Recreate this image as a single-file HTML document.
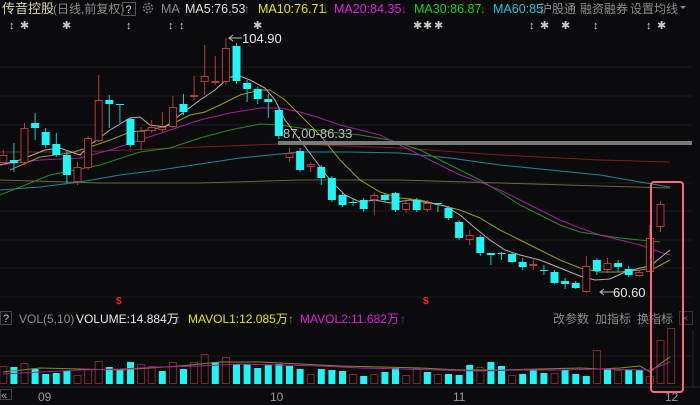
<!DOCTYPE html>
<html><head><meta charset="utf-8">
<style>
html,body{margin:0;padding:0;background:#0b0b0d;width:700px;height:405px;overflow:hidden}
svg{display:block}
text{font-family:"Liberation Sans","Noto Sans CJK SC",sans-serif}
</style></head><body>
<svg id="s" width="700" height="405" viewBox="0 0 700 405" xmlns="http://www.w3.org/2000/svg">
<rect width="700" height="405" fill="#0b0b0d"/>
<g stroke="#1c1c1f" stroke-width="1">
<line x1="0" y1="67" x2="692" y2="67"/><line x1="0" y1="96" x2="692" y2="96"/><line x1="0" y1="125" x2="692" y2="125"/>
<line x1="0" y1="183" x2="692" y2="183"/><line x1="0" y1="211" x2="692" y2="211"/><line x1="0" y1="240" x2="692" y2="240"/>
<line x1="0" y1="268" x2="692" y2="268"/><line x1="0" y1="297" x2="692" y2="297"/><line x1="0" y1="356" x2="692" y2="356"/>
</g>
<line x1="0" y1="387" x2="700" y2="387" stroke="#2a2a2e"/>
<line x1="693" y1="330" x2="693" y2="387" stroke="#2a2a2e"/>
<g id="lines" fill="none" stroke-width="1"></g>
<rect x="278" y="141" width="414" height="4" fill="#7a7a7a"/>
<text x="283" y="138" font-size="13" fill="#bdbdbd">87.00-86.33</text>
<g id="c"></g>
<g id="v"></g>
<text x="2" y="13" font-size="13" fill="#ddd6a8">传音控股</text>
<text x="53" y="13" font-size="12" fill="#8c8c8c">(日线,前复权)</text>
<rect x="122.5" y="2.5" width="13" height="13" fill="none" stroke="#555"/>
<text x="125.5" y="13" font-size="11" fill="#ccc">?</text>
<circle cx="148" cy="8" r="4.5" fill="none" stroke="#777" stroke-width="1.5" stroke-dasharray="2 1.5"/>
<circle cx="148" cy="8" r="2" fill="none" stroke="#777"/>
<text x="161" y="13" font-size="12.5" fill="#8c8c8c">MA</text>
<text x="185" y="13" font-size="12.5" fill="#e0e0e0">MA5:76.53</text>
<text x="244" y="13" font-size="12" fill="#888">↑</text>
<text x="258" y="13" font-size="12.5" fill="#e6e600">MA10:76.71</text>
<text x="323" y="13" font-size="12" fill="#9a9a30">↓</text>
<text x="334" y="13" font-size="12.5" fill="#e020e0">MA20:84.35</text>
<text x="401" y="13" font-size="12" fill="#a020a0">↓</text>
<text x="414" y="13" font-size="12.5" fill="#20d020">MA30:86.87</text>
<text x="480" y="13" font-size="12" fill="#1a9a1a">↓</text>
<text x="493" y="13" font-size="12.5" fill="#20c8d8">MA60:85</text>
<text x="540" y="13" font-size="12" fill="#8c8c8c">沪股通</text>
<text x="580" y="13" font-size="12" fill="#8c8c8c">融资融券</text>
<text x="630" y="13" font-size="12" fill="#8c8c8c">设置均线</text>
<path d="M680 6 L686 6 L683 9Z" fill="#888"/>
<g id="marks"></g>
<path d="M242 38 L229 38 M233 35 L229 38 L233 41" stroke="#bbb" fill="none"/>
<text x="242" y="43" font-size="13" fill="#e8e8e8">104.90</text>
<path d="M614 292 L600 292 M604 289 L600 292 L604 295" stroke="#bbb" fill="none"/>
<text x="613" y="297" font-size="13" fill="#e8e8e8">60.60</text>
<text x="116" y="304" font-size="10" font-weight="bold" fill="#ff2020">$</text>
<text x="423" y="304" font-size="10" font-weight="bold" fill="#ff2020">$</text>
<rect x="0.5" y="311.5" width="11" height="13" fill="none" stroke="#444"/>
<text x="3" y="322" font-size="11" fill="#ccc">?</text>
<text x="19" y="323" font-size="12" fill="#8c8c8c">VOL(5,10)</text>
<text x="76" y="323" font-size="12" fill="#e8e8e8">VOLUME:14.884万</text>
<text x="175" y="323" font-size="12" fill="#888">↑</text>
<text x="188" y="323" font-size="12" fill="#e6e600">MAVOL1:12.085万</text>
<text x="288" y="323" font-size="12" fill="#9a9a30">↑</text>
<text x="300" y="323" font-size="12" fill="#e020e0">MAVOL2:11.682万</text>
<text x="400" y="323" font-size="12" fill="#a020a0">↑</text>
<text x="553" y="323" font-size="12" fill="#8c8c8c">改参数</text>
<text x="595" y="323" font-size="12" fill="#8c8c8c">加指标</text>
<text x="637" y="323" font-size="12" fill="#8c8c8c">换指标</text>
<rect x="679.5" y="311.5" width="13" height="13" fill="none" stroke="#333"/>
<text x="682" y="322" font-size="11" fill="#555">×</text>
<rect x="0.5" y="389.5" width="11" height="10" fill="none" stroke="#444"/>
<text x="1" y="399" font-size="11" fill="#aaa">«</text>
<text x="38" y="401" font-size="12" fill="#999">09</text>
<text x="270" y="401" font-size="12" fill="#999">10</text>
<text x="453" y="401" font-size="12" fill="#999">11</text>
<text x="665" y="401" font-size="12" fill="#999">12</text>
<rect x="651" y="182" width="32" height="210" rx="3" fill="none" stroke="#ff6878" stroke-width="2"/>
</svg>
<script>
var NS="http://www.w3.org/2000/svg";
function el(p,t,a){var e=document.createElementNS(NS,t);for(var k in a)e.setAttribute(k,a[k]);p.appendChild(e);return e;}
var C=[["r",155,163,150,165],["c",160,163,143,172],["r",128,163,123,165],["c",123,128,113,140],["c",132,145,128,148],["c",144,155,133,157],["c",155,175,150,183],["r",167,182,162,185],["r",138,168,136,170],["r",100,141,75,142],["c",100,104,95,128],["c",104,105,104,123],["c",119,145,117,147],["r",131,142,127,150],["r",127,131,120,133],["r",127,130,112,133],["r",107,127,96,128],["c",104,112,94,115],["r",95,96,76,100],["r",76,82,45,95],["r",81,82,56,85],["r",48,82,38,85],["c",46,81,43,84],["c",83,89,80,102],["c",89,99,87,104],["c",99,102,94,118],["c",110,136,108,139],["r",153,158,148,162],["c",151,170,148,172],["r",164,167,162,172],["c",167,178,165,185],["c",178,200,176,202],["c",195,205,193,207],["c",202,203,198,206],["c",200,209,198,212],["r",195,200,193,215],["c",195,200,193,202],["c",193,210,192,212],["r",203,210,200,213],["c",200,210,198,212],["r",203,210,200,212],["c",203,204,203,212],["c",208,218,206,220],["c",222,238,220,240],["r",235,240,230,245],["c",237,253,235,256],["c",253,255,253,265],["c",253,254,252,260],["c",254,262,252,263],["c",262,267,258,270],["r",264,265,258,270],["c",270,271,265,275],["c",272,283,270,284],["c",281,284,278,289],["c",283,288,281,289],["r",266,292,256,293],["c",260,271,258,275],["r",263,270,258,273],["c",263,267,260,272],["c",269,275,266,277],["r",272,276,270,277],["r",238,272,225,272],["r",204,227,201,232]];
var V=[366,367,363,369,374,373,371,375,369,361,367,369,362,364,366,371,362,369,362,354,362,357,364,364,368,365,364,366,369,374,369,370,371,374,376,374,372,368,375,368,372,374,374,375,365,367,362,366,375,374,369,373,373,370,374,376,350,369,370,370,370,376,340,328];
var VCarr=["r","c","r","c","c","c","c","r","r","r","c","c","c","r","r","c","r","c","r","r","c","r","c","c","c","c","c","c","c","r","c","c","c","r","c","r","c","c","r","r","c","r","c","c","c","r","c","c","r","c","c","c","r","c","c","c","r","c","r","c","c","r","r","r"];
var cg=document.getElementById("c"),vg=document.getElementById("v");
var RED="#b83a3a",CY="#1ef5f5",VRED="#7a2a2a";
for(var i=0;i<C.length;i++){var x=3.3+10.6*i,d=C[i];
 el(cg,"line",{x1:x,x2:x,y1:d[3],y2:d[4],stroke:d[0]=="r"?RED:"#17c8c8","stroke-width":1});
 var h=Math.max(d[2]-d[1],1);
 if(d[0]=="r"){el(cg,"rect",{x:x-3.5,y:d[1]+.5,width:7,height:Math.max(h-1,1),fill:"#0b0b0d",stroke:RED,"stroke-width":1});}
 else el(cg,"rect",{x:x-4,y:d[1],width:8,height:h,fill:CY});
}
for(var i=0;i<V.length;i++){var x=3.3+10.6*i;var c=VCarr[i];
 if(c=="r")el(vg,"rect",{x:x-3.5,y:V[i]+.5,width:7,height:384-V[i]-1,fill:"none",stroke:VRED});
 else el(vg,"rect",{x:x-3.5,y:V[i],width:7,height:384-V[i],fill:CY});
}
function pl(pts,col){el(document.getElementById("lines"),"polyline",{points:pts,stroke:col,fill:"none","stroke-width":1});}
pl("0,152 80,152 200,147 280,144 320,145 400,148 500,155 600,160 670,162","#7a1f1f");
pl("0,180 100,183 200,183 300,180 400,180 500,183 600,186 670,188","#6a6a3a");
pl("0,190 40,187 80,182 120,175 160,170 200,164 240,158 270,155 300,152 350,152 400,153 450,158 500,165 550,170 600,175 640,182 670,187","#1a8a9a");
pl("0,195 50,175 100,165 140,152 170,148 200,138 230,130 260,124 280,125 300,128 330,132 360,135 390,140 420,150 440,160 460,170 480,180 500,192 520,205 540,215 560,225 580,232 600,235 620,238 640,240 660,242","#1f8f1f");
pl("0,165 40,160 80,158 110,150 140,140 170,130 200,120 230,113 260,108 280,108 300,112 320,118 340,125 360,130 380,135 400,145 420,155 440,165 460,175 480,182 500,190 520,200 540,210 560,220 580,228 600,235 620,240 640,245 660,252 670,255","#a020a0");
pl("10,170 40,157 70,153 90,147 110,140 130,132 150,130 170,125 190,115 205,112 220,105 240,95 260,90 270,90 285,100 300,115 320,135 340,160 360,180 380,192 400,198 420,200 440,205 460,210 480,218 500,230 520,240 540,250 560,260 580,268 600,272 620,272 640,270 655,268 670,260","#9a9a20");
pl("0,165 20,160 45,150 60,148 80,155 90,145 110,130 130,118 140,117 150,125 165,127 180,115 200,100 215,90 228,78 237,75 250,80 265,88 275,100 285,120 300,140 315,160 330,180 345,195 360,202 375,200 390,203 410,200 430,203 445,206 460,215 475,228 490,240 505,250 520,255 540,260 560,268 580,276 595,280 610,279 625,272 640,268 650,266 660,258 670,250","#b0b0b0");
el(vg,"polyline",{points:"3,372 40,368 80,369 120,370 150,368 180,366 220,362 260,362 300,364 340,366 380,367 420,368 460,370 500,370 540,369 580,368 600,369 620,368 640,366 650,372 660,364 670,357",stroke:"#8a8a20",fill:"none"});
el(vg,"polyline",{points:"3,374 40,372 80,370 120,369 160,367 200,366 240,364 280,365 320,366 360,368 400,369 440,370 480,371 520,370 560,370 600,369 640,370 650,370 660,366 670,362",stroke:"#a020a0",fill:"none"});
var mg=document.getElementById("marks");
var M=[[13,"s"],[24,"a"],[66,"a"],[130,"s"],[172,"s"],[183,"s"],[257,"a"],[417,"a"],[427,"a"],[438,"a"],[533,"s"],[544,"a"],[565,"a"],[597,"s"],[650,"s"],[661,"a"]];
M.forEach(function(m){var t=el(mg,"text",{x:m[0]-4,y:29,"font-size":11,fill:"#c8c8c8"});t.textContent=m[1]=="a"?"✱":"↕";});
</script>
</body></html>
